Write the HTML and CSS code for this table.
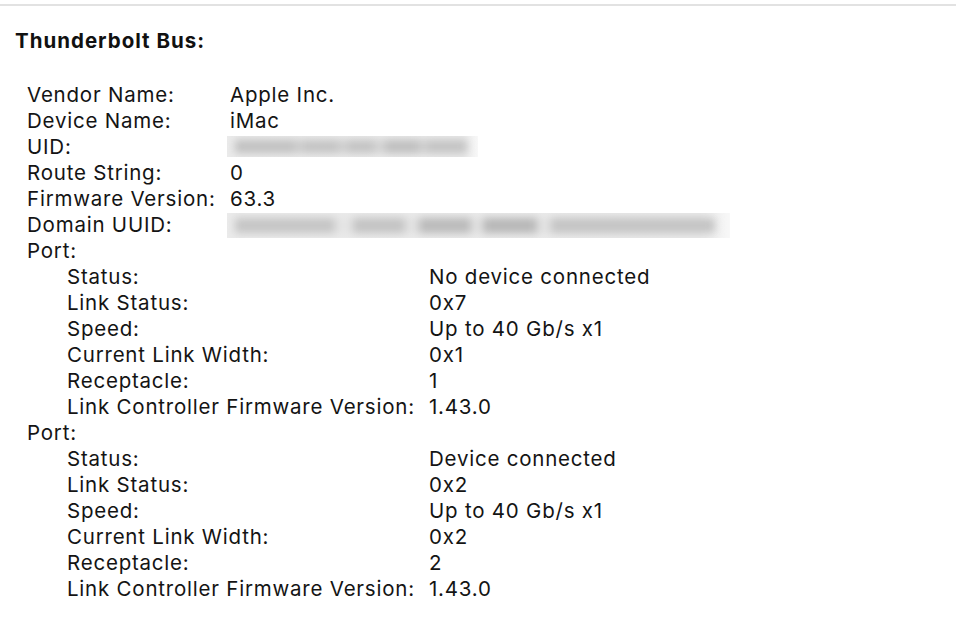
FILE: index.html
```html
<!DOCTYPE html>
<html>
<head>
<meta charset="utf-8">
<link rel="stylesheet" href="styles.css">
</head>
<body>
<div class="rule"></div>
<h1 class="title">Thunderbolt Bus:</h1>
<dl class="props">
  <dt>Vendor Name:</dt><dd>Apple Inc.</dd>
  <dt>Device Name:</dt><dd>iMac</dd>
  <dt>UID:</dt><dd><span class="redact redact-uid"><span class="smear smear-uid"></span></span></dd>
  <dt>Route String:</dt><dd>0</dd>
  <dt>Firmware Version:</dt><dd>63.3</dd>
  <dt>Domain UUID:</dt><dd><span class="redact redact-uuid"><span class="smear smear-uuid"></span></span></dd>
  <dt class="group">Port:</dt>
  <dd class="group-body">
    <dl class="sub">
      <dt>Status:</dt><dd>No device connected</dd>
      <dt>Link Status:</dt><dd>0x7</dd>
      <dt>Speed:</dt><dd>Up to 40 Gb/s x1</dd>
      <dt>Current Link Width:</dt><dd>0x1</dd>
      <dt>Receptacle:</dt><dd>1</dd>
      <dt>Link Controller Firmware Version:</dt><dd>1.43.0</dd>
    </dl>
  </dd>
  <dt class="group">Port:</dt>
  <dd class="group-body">
    <dl class="sub">
      <dt>Status:</dt><dd>Device connected</dd>
      <dt>Link Status:</dt><dd>0x2</dd>
      <dt>Speed:</dt><dd>Up to 40 Gb/s x1</dd>
      <dt>Current Link Width:</dt><dd>0x2</dd>
      <dt>Receptacle:</dt><dd>2</dd>
      <dt>Link Controller Firmware Version:</dt><dd>1.43.0</dd>
    </dl>
  </dd>
</dl>
</body>
</html>
```
FILE: styles.css
```css
html, body {
  margin: 0;
  padding: 0;
  background: #ffffff;
}
body {
  font-family: Inter, "Liberation Sans", sans-serif;
  color: #141414;
  width: 956px;
  height: 624px;
  overflow: hidden;
}
.rule {
  margin-top: 4px;
  border-top: 2px solid #e2e2e2;
}
.title {
  margin: 22px 0 0 15px;
  font-size: 20.5px;
  font-weight: 700;
  letter-spacing: 1px;
  line-height: 26px;
  color: #111;
}
.props {
  margin: 28px 0 0 27px;
  display: grid;
  grid-template-columns: 203px 1fr;
  font-size: 20.5px;
  letter-spacing: 0.78px;
  line-height: 26px;
}
.props dt, .props dd {
  margin: 0;
  white-space: nowrap;
}
.props .group {
  grid-column: 1 / -1;
}
.props .group-body {
  grid-column: 1 / -1;
  padding-left: 40px;
}
.sub {
  margin: 0;
  display: grid;
  grid-template-columns: 362px 1fr;
}
.redact {
  display: inline-block;
  position: relative;
  overflow: hidden;
  vertical-align: middle;
  margin-left: -3px;
  background: linear-gradient(90deg, #ebebeb 0, #eaeaea 94%, #f8f8f8 100%);
}
.redact-uid {
  width: 251px;
  height: 21px;
  margin-top: -4px;
}
.redact-uuid {
  width: 503px;
  height: 25px;
  margin-top: -2px;
}
.smear {
  position: absolute;
  left: 8px;
  top: 4px;
  bottom: 4px;
  filter: blur(4px);
}
.smear-uid {
  width: 232px;
  background: linear-gradient(90deg,
    #bfbfbf 0 60px, #cccccc 60px 68px, #c2c2c2 68px 104px, #d0d0d0 104px 112px,
    #c2c2c2 112px 140px, #d4d4d4 140px 150px, #bdbdbd 150px 184px, #cecece 184px 192px, #c2c2c2 192px 232px);
}
.smear-uuid {
  width: 480px;
  top: 5px;
  bottom: 5px;
  background: linear-gradient(90deg,
    #c4c4c4 0 100px, #e4e4e4 100px 118px, #c2c2c2 118px 170px, #e2e2e2 170px 184px,
    #b9b9b9 184px 236px, #e2e2e2 236px 248px, #b6b6b6 248px 302px, #e2e2e2 302px 316px,
    #c3c3c3 316px 480px);
}
```
